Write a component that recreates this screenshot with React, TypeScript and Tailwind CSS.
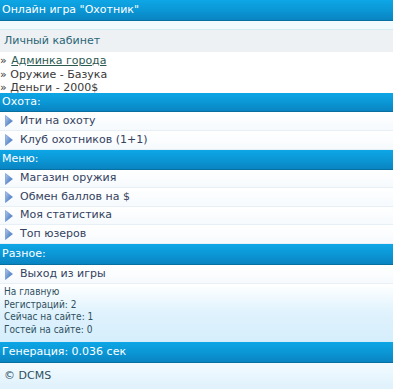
import React from 'react';

const font = "font-['DejaVu_Sans',Verdana,sans-serif]";

// blue header bar
const Bar = ({ children, className = '' }: { children: React.ReactNode; className?: string }) => (
  <div
    className={`flex items-center px-[2px] text-white bg-gradient-to-b from-[#0ea6e6] via-[#0b97d6] to-[#0a84c2] border-b border-[#0870a0] ${className}`}
  >
    {children}
  </div>
);

const Arrow = () => (
  <svg width="8" height="12" viewBox="0 0 8 12" className="shrink-0">
    <defs>
      <linearGradient id="arr" x1="0" y1="0" x2="1" y2="1">
        <stop offset="0" stopColor="#b4cdee" />
        <stop offset="1" stopColor="#2d62b6" />
      </linearGradient>
    </defs>
    <path d="M0.5 0.5 L7.5 6 L0.5 11.5 Z" fill="url(#arr)" stroke="#4a7cc6" strokeWidth="0.5" />
  </svg>
);

const Item = ({ text, tall }: { text: string; tall?: boolean }) => (
  <div
    className={`flex items-center gap-[7px] pl-[5px] bg-gradient-to-b from-white to-[#f6fafd] border-b border-[#e6f0f6] text-[#34425e] text-[11px] ${
      tall ? 'h-[19px]' : 'h-[18px]'
    }`}
  >
    <Arrow />
    <span>{text}</span>
  </div>
);

export default function App() {
  return (
    <div className={`w-[395px] h-[389px] bg-white overflow-hidden ${font}`}>
      <div className="w-[393px]">
        <Bar className="h-[21px] text-[11px]">Онлайн игра "Охотник"</Bar>
        <div className="h-[9px] bg-[#f1fbfe] border-b border-[#d6ecf3]" />

        <div className="h-[22px] flex items-center px-[4px] bg-[#eef1f4] text-[#2b6676] text-[11px]">
          Личный кабинет
        </div>
        <div className="h-[41px] bg-white pt-[2px] text-[11px] leading-[13.5px] text-[#383838]">
          <div>
            » <a href="#" className="underline text-[#2c5a52] ml-[1px]">Админка города</a>
          </div>
          <div>» Оружие - Базука</div>
          <div>» Деньги - 2000$</div>
        </div>

        <Bar className="h-[19px] text-[11px]">Охота:</Bar>
        <Item text="Ити на охоту" tall />
        <Item text="Клуб охотников (1+1)" tall />

        <Bar className="h-[20px] text-[11px]">Меню:</Bar>
        <Item text="Магазин оружия" />
        <Item text="Обмен баллов на $" tall />
        <Item text="Моя статистика" />
        <Item text="Топ юзеров" tall />

        <Bar className="h-[21px] text-[11px]">Разное:</Bar>
        <Item text="Выход из игры" tall />

        <div className="h-[58px] pt-[2px] px-[4px] bg-gradient-to-b from-white via-[#dff2fd] to-[#d6eefc] text-[#2f5060] text-[10px] leading-[12.5px] font-['DejaVu_Sans_Condensed','DejaVu_Sans',sans-serif]">
          <div>На главную</div>
          <div>Регистраций: 2</div>
          <div>Сейчас на сайте: 1</div>
          <div>Гостей на сайте: 0</div>
        </div>

        <Bar className="h-[21px] text-[11px]">Генерация: 0.036 сек</Bar>

        <div className="h-[26px] flex items-center px-[4px] bg-gradient-to-b from-[#f2fbff] to-[#dff1fc] text-[#2f4f5e] text-[11px]">
          © DCMS
        </div>
      </div>
    </div>
  );
}
